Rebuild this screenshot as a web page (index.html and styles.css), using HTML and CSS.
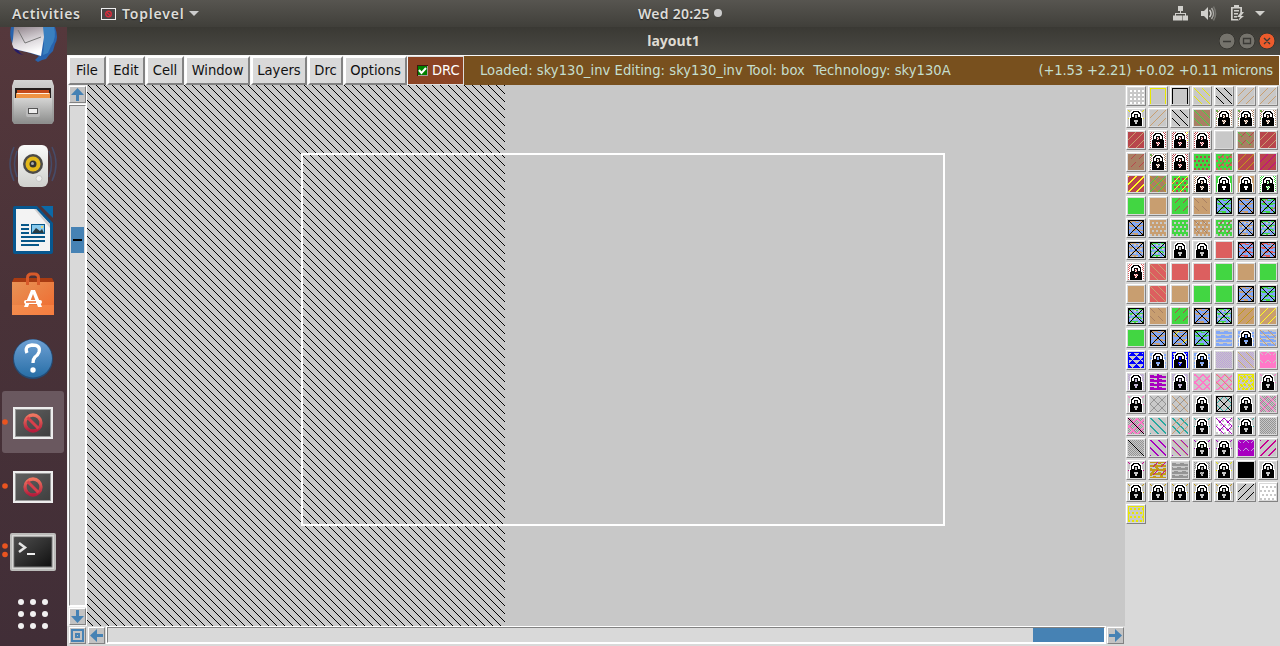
FILE: index.html
```html
<!DOCTYPE html>
<html lang="en">
<head>
<meta charset="utf-8">
<title>layout1</title>
<link rel="stylesheet" href="styles.css">
</head>
<body>
<header class="topbar">
  <span class="activities">Activities</span>
  <svg class="appicon" width="15" height="12"><rect width="15" height="12" fill="#eee"/><rect x="1" y="1" width="13" height="10" fill="#484546"/><circle cx="7.500" cy="6" r="2.800" fill="none" stroke="#d92c3c" stroke-width="1.400"/><path d="M5.500 4l4 4" stroke="#d92c3c" stroke-width="1.200"/></svg>
  <span class="appname">Toplevel</span>
  <svg class="caret" width="10" height="5"><path d="M0 0h10l-5 5z" fill="#ccc"/></svg>
  <span class="clock">Wed 20:25</span><i class="clockdot"></i>
  <svg class="tray" width="100" height="27" fill="#d0cfcb">
    <path d="M8 6h5v5h-2v2h5v2.500h2v5h-5v-5h2V14h-9v1.500h2v5H3v-5h2V13h5v-2H8z M9.500 15.500h2v0h1v5h-5v-5h2V14h0z"/>
    <path d="M31 11h3l4-4v13l-4-4h-3z"/><path d="M39.500 10q3 3.500 0 7" fill="none" stroke="#d0cfcb" stroke-width="1.500"/><path d="M41.500 8q4 5.500 0 11" fill="none" stroke="#aaa9a5" stroke-width="1.500"/><path d="M43.500 6.500q4 7 0 14" fill="none" stroke="#777671" stroke-width="1.500"/>
    <g transform="translate(1)"><path d="M63 5h5v2h3v6h-1.700V8.600h-7.600v10.300H67v1.600h-7V7h3z"/><path d="M63 10h5v1.400h-5zM63 13h4v1.400h-4zM63 16h3v1.400h-3zM70 12l-4 5h3l-2 4 6-5h-3l3-4z"/>
    <path d="M84 11h10l-5 5z"/></g>
  </svg>
</header>
<div class="desktop">
  <nav class="dock">
    <svg width="67" height="619" viewBox="0 27 67 619">
      <defs>
        <linearGradient id="blue" x2="0" y2="1"><stop stop-color="#6ea0d4"/><stop offset="1" stop-color="#276ea6"/></linearGradient>
        <linearGradient id="paper" x2=".3" y2="1"><stop stop-color="#8d8088"/><stop offset=".6" stop-color="#dcd8dc"/><stop offset="1" stop-color="#fff"/></linearGradient>
        <linearGradient id="bag" x2="1" y2="1"><stop stop-color="#e79356"/><stop offset="1" stop-color="#f0692e"/></linearGradient>
        <linearGradient id="metal" x2="0" y2="1"><stop stop-color="#d5d5d4"/><stop offset="1" stop-color="#8d8e8d"/></linearGradient>
        <linearGradient id="red" x2="0" y2="1"><stop stop-color="#ef7660"/><stop offset="1" stop-color="#b61d3c"/></linearGradient>
        <linearGradient id="term" x2="1" y2="1"><stop stop-color="#4b4b4b"/><stop offset=".5" stop-color="#303030"/><stop offset="1" stop-color="#111"/></linearGradient>
        <linearGradient id="speaker" x2="0" y2="1"><stop stop-color="#fafafa"/><stop offset="1" stop-color="#cfd0cd"/></linearGradient>
        <g id="window"><rect x="13" y="-16" width="40" height="32" fill="#ededed"/><rect x="15" y="-14" width="36" height="28" fill="#999"/><rect x="16" y="-13" width="34" height="26" fill="url(#term)"/><rect x="16" y="-13" width="34" height="26" fill="#777" opacity=".45"/><circle cx="33" cy="0" r="8" fill="none" stroke="url(#red)" stroke-width="3.300"/><path d="M27.500-5.500l11 11" stroke="#d83f4b" stroke-width="3"/></g>
      </defs>
      <path d="M11 27h44q4 11 0 17l-2 7-4 4-3 4-4 1-4 2-3-2 4-4-12-4-10-2-5-7q-3-8-1-16z" fill="#2863ad"/>
      <path d="M42 27h12q3 11-3 19l-3 7-5 2 1-10z" fill="#3a80c0"/><path d="M14 27h29l1 10-3 19-10-3-17-4-2-5 1-5z" fill="url(#paper)"/><path d="M13 48l5 2q2 4 6 5-8-1-11-7z" fill="#251b68"/><path d="M18 30l7 13 16-6" fill="none" stroke="#777" stroke-width="1"/>
      <rect x="2" y="391" width="62" height="62" rx="3" fill="#6a585f"/>
      <path d="M14 80h38l2 6v35l-2 3H14l-2-3V86z" fill="url(#metal)"/><rect x="15" y="88" width="36" height="11" fill="#241e1d"/><path d="M17 90h32v8H17z" fill="#c44a1a"/><path d="M16 93h34v5H16z" fill="#ef9342"/><path d="M17 93.500h32" stroke="#fff1df"/><rect x="14" y="98" width="38" height="25" fill="url(#metal)"/><rect x="26" y="106" width="14" height="11" rx="2" fill="#bbb"/><rect x="28.500" y="108.500" width="9" height="5" fill="#eee" stroke="#555"/>
      <g fill="none" stroke="#464c69" stroke-width="1.500"><path d="M14 147q-8 17 0 34M52 147q8 17 0 34M17 151q-5 13 0 26M49 151q5 13 0 26"/></g>
      <rect x="18" y="145" width="30" height="42" rx="6" fill="url(#speaker)"/><circle cx="33" cy="164" r="10" fill="#4d4b48"/><circle cx="33" cy="164" r="7.500" fill="#e3b81a"/><circle cx="33" cy="164" r="3.500" fill="#333"/><circle cx="32.500" cy="163.500" r="1.500" fill="#aaa"/><circle cx="39" cy="178.500" r="3" fill="#eee" stroke="#c7c7c5"/>
      <path d="M15 206h22l16 17v29q0 2-2 2H15q-2 0-2-2v-44q0-2 2-2z" fill="#07578f"/><path d="M41 206h12v12z" fill="#0b69a7"/><path d="M16 209h20l14 15v27H16z" fill="#f3f3f3"/><path d="M36 209l14 15v4L34 209z" fill="#cfcfcf"/><path d="M21 225h8M21 229h8M21 233h8M21 237h24M21 241h24M21 245h18" stroke="#075788" stroke-width="2"/><rect x="31" y="224" width="14" height="10" fill="#075788"/><rect x="32" y="225" width="12" height="8" fill="#86c9ed"/><path d="M32 233l4-5 4 3 2-2 2 4z" fill="#293b42"/><circle cx="42" cy="227" r="1" fill="#ffd94c"/>
      <path d="M14 278h38l2 4v33H12v-33z" fill="#a83b12"/><path d="M12 282h42v33H12z" fill="url(#bag)"/><path d="M12 305h42v10H12z" fill="#ff9a5a" opacity=".4"/><path d="M27.500 285v-7q0-4 4-4h3q4 0 4 4v7" fill="none" stroke="#d85a2a" stroke-width="3"/><path d="M31 290h4l7 17h-4l-5-13-5 13h-4z" fill="#fff"/><rect x="24" y="300" width="18" height="4" rx="2" fill="#fff"/><path d="M26 302h10" stroke="#e8692d" stroke-width="1.500"/>
      <circle cx="33" cy="359" r="20" fill="#244b75"/><circle cx="33" cy="358.500" r="19" fill="url(#blue)"/><path d="M27 353q-3-7 5-8 9 0 7 7-1 3-4 5-2 2-2 6" fill="none" stroke="#fff" stroke-width="3.300"/><circle cx="33" cy="370" r="2.700" fill="#fff"/>
      <use href="#window" y="423"/><use href="#window" y="487"/>
      <rect x="10" y="533" width="46" height="38" rx="2" fill="#bcbcba"/><rect x="12" y="535" width="42" height="34" fill="#d8d8d6"/><rect x="14" y="537" width="38" height="30" fill="#222" stroke="#777"/><rect x="15" y="538" width="36" height="28" fill="url(#term)"/><path d="M19 543l6 4.500-6 4.500" fill="none" stroke="#e6e6e6" stroke-width="2.500"/><path d="M27 554h8" stroke="#eee" stroke-width="2"/>
      <g fill="#e95420"><circle cx="5" cy="422" r="2.800"/><circle cx="5" cy="486" r="2.800"/><circle cx="5" cy="546" r="2.800"/><circle cx="5" cy="554.500" r="2.800"/></g>
      <g fill="#f2f1f1"><circle cx="21" cy="602" r="3"/><circle cx="33" cy="602" r="3"/><circle cx="45" cy="602" r="3"/><circle cx="21" cy="614" r="3"/><circle cx="33" cy="614" r="3"/><circle cx="45" cy="614" r="3"/><circle cx="21" cy="626" r="3"/><circle cx="33" cy="626" r="3"/><circle cx="45" cy="626" r="3"/></g>
    </svg>
  </nav>
  <main class="window">
    <div class="titlebar"><span>layout1</span>
      <svg class="controls" width="60" height="28"><g stroke="#363530"><circle cx="8" cy="14" r="8" fill="#75736c"/><circle cx="28" cy="14" r="8" fill="#75736c"/><circle cx="48" cy="14" r="8" fill="#ed5b2c"/></g><path d="M4 14.500h8M24.500 11.500h7v5h-7zM45 11l6 6M51 11l-6 6" fill="none" stroke="#3a3935" stroke-width="1.300"/></svg>
    </div>
    <div class="menubar">
      <button class="menu file">File</button><button class="menu edit">Edit</button><button class="menu cell">Cell</button><button class="menu win">Window</button><button class="menu layers">Layers</button><button class="menu drc">Drc</button><button class="menu options">Options</button>
      <label class="check"><svg width="11" height="11"><rect width="11" height="11" fill="#a99"/><path d="M0 0h11v1H1v10H0z" fill="#3f180d"/><rect x="1" y="1" width="9" height="9" fill="#008000"/><path d="M2 5l2.500 3L9 3" fill="none" stroke="#fff" stroke-width="2"/></svg><span>DRC</span></label>
      <div class="status"><span class="message">Loaded: sky130_inv Editing: sky130_inv Tool: box&nbsp; Technology: sky130A</span><span class="coords">(+1.53 +2.21) +0.02 +0.11 microns</span></div>
    </div>
    <div class="workspace">
      <section class="editor">
        <div class="vbar">
          <div class="key"><svg width="13" height="13"><path d="M6.500 0L13 7H8v6H5V7H0z"/></svg></div>
          <div class="vtrack"><div class="vthumb"></div></div>
          <div class="key"><svg width="13" height="13"><path d="M6.500 13L13 6H8V0H5v6H0z"/></svg></div>
        </div>
        <svg class="canvas" width="1038" height="541" shape-rendering="crispEdges">
          <defs><pattern id="hatch" x="1" width="8" height="8" patternUnits="userSpaceOnUse"><path d="M0 0h1v1h-1zM1 1h1v1h-1zM2 2h1v1h-1zM3 3h1v1h-1zM4 4h1v1h-1zM5 5h1v1h-1zM6 6h1v1h-1zM7 7h1v1h-1z"/></pattern></defs>
          <rect width="1038" height="541" fill="#c8c8c8"/><rect width="418" height="541" fill="url(#hatch)"/>
          <rect x="215" y="69" width="642" height="371" fill="none" stroke="#fff" stroke-width="2"/>
        </svg>
        <div class="key corner"><svg width="13" height="13"><path fill-rule="evenodd" d="M0 0h13v13H0zM2 2v9h9V2zM4 4h5v5H4zM6 6v1h1V6z"/></svg></div>
        <div class="hbar">
          <div class="key"><svg width="13" height="13"><path d="M0 6.500L7 0v5h6v3H7v5z"/></svg></div>
          <div class="htrack"><div class="hthumb"></div></div>
          <div class="key"><svg width="13" height="13"><path d="M13 6.500L6 0v5H0v3h6v5z"/></svg></div>
        </div>
      </section>
      <aside class="palette" id="palette"></aside>
    </div>
  </main>
</div>
<script src="palette.js"></script>
</body>
</html>
```
FILE: styles.css
```css
* { box-sizing: border-box; }
body { margin: 0; width: 1280px; height: 646px; overflow: hidden; background: #d9d9d9; font-family: "DejaVu Sans Condensed", "DejaVu Sans", sans-serif; font-stretch: condensed; }
svg { display: block; flex: none; }
.topbar { position: relative; display: flex; align-items: center; height: 27px; padding-left: 12px; background: linear-gradient(#575550, #403f3a); color: #dddcd8; font: 600 14px/27px "Noto Sans", sans-serif; text-shadow: 0 1px 1px #222; white-space: nowrap; }
.activities { width: 89px; letter-spacing: .6px; }
.appname { margin-left: 6px; width: 67px; letter-spacing: .8px; }
.clock { position: absolute; left: 638px; letter-spacing: .25px; }
.clockdot { position: absolute; left: 714px; top: 9px; width: 8px; height: 8px; border-radius: 50%; background: #ccc; }
.tray { position: absolute; left: 1170px; top: 0; }
.desktop { display: flex; height: 619px; }
.dock { width: 67px; flex: none; background: linear-gradient(#55383c, #493238 45%, #412e37); }
.window { width: 1213px; }
.titlebar { height: 28px; position: relative; display: flex; justify-content: center; background: linear-gradient(#3a3934, #4a4943); color: #dfdbd2; font: 700 14px/28px "Noto Sans", sans-serif; }
.controls { position: absolute; right: 1px; top: 0; }
.menubar { display: flex; height: 30px; background: #f8f8f8; padding: 1px 1px 0; gap: 1px; font-size: 14.6px; }
.menu { height: 29px; margin: 0; padding: 0 0 3px; font: inherit; color: #111; background: #d9d9d9; border: 2px solid; border-color: #fff #828282 #828282 #fff; white-space: nowrap; }
.file, .edit, .cell { width: 38px; }
.win { width: 65px; }
.layers { width: 56px; }
.drc { width: 35px; }
.options { width: 63px; }
.check { display: flex; align-items: center; gap: 4px; width: 56px; padding-left: 9px; background: #8c4424; color: #fff; border: solid #ddd; border-width: 1px 1px 1px 0; }
.check span { padding-bottom: 2px; }
.status { flex: 1; display: flex; justify-content: space-between; align-items: center; margin-left: -1px; padding: 0 6px 2px 16px; background: #78501e; color: #c5dfcf; white-space: pre; }
.message { letter-spacing: .045px; }
.coords { letter-spacing: -.16px; }
.workspace { display: flex; height: 561px; }
.editor { display: grid; grid-template: 541px 20px / 20px 1038px; background: #d9d9d9; }
.vbar { display: flex; flex-direction: column; align-items: center; padding: 1px 0 1px 1px; gap: 2px; height: 541px; background: #eee; border-right: 1px solid #fff; }
.key { width: 17px; height: 17px; flex: none; padding: 1px; background: #c3c3c3; border: 1px solid; border-color: #fff #828282 #828282 #fff; }
.key svg { fill: #4682b4; }
.vtrack { width: 17px; flex: 1; padding: 121px 0 0 1px; border: 1px solid; border-color: #828282 #fff #fff #828282; outline: 1px solid #fff; background: #d9d9d9; }
.vthumb { width: 13px; height: 26px; background: #4682b4; padding: 12px 2px; }
.vthumb::before { content: ""; display: block; height: 2px; background: #000; }
.corner { margin: 1px 0 0 2px; }
.hbar { display: flex; align-items: flex-start; gap: 2px; padding: 1px 1px 0; }
.htrack { flex: 1; height: 16px; display: flex; justify-content: flex-end; border: 1px solid; border-color: #828282 #fff #fff #828282; outline: 1px solid #fff; background: #d9d9d9; }
.hthumb { width: 71px; height: 14px; background: #4682b4; }
.palette { flex: 1; display: grid; grid-template-columns: repeat(7, 20px); grid-auto-rows: 20px; align-content: start; gap: 2px; padding: 1px 0 0 1px; background: #d9d9d9; }
.swatch { width: 20px; height: 20px; padding: 1px; border: 1px solid; border-color: #fff #828282 #828282 #fff; background: #d9d9d9; }
```
FILE: palette.js
```js
// Colour keys used by the layer table.
const colors = {
  _: "#c8c8c8", w: "#ffffff", y: "#e8e800", k: "#000000", t: "#c89e70", b: "#a88064",
  g: "#42d642", r: "#dc5f5f", d: "#b8464c", u: "#82a8f8", B: "#0000ff", v: "#bda0dc",
  p: "#ff78c8", P: "#a800c0", c: "#28a8a0", e: "#949494", o: "#c39a18", m: "#c80090", Y: "#ffff20"
};

// Each test tells whether the pixel at (x, y) of the 16 by 16 swatch is painted.
const tests = {
  dots: (x, y) => x % 4 > 1 && y % 4 > 1,
  stag: (x, y) => (x + (y >> 2) * 2) % 4 > 1 && y % 4 > 1,
  grid: (x, y) => !((x + (y >> 2) * 2) % 4 > 1 && y % 4 > 1),
  edge: (x, y) => y < 1 || x < 1 || x > 14,
  fall: (x, y) => (x - y + 16) % 8 === 0,
  Fall: (x, y) => (x - y + 16) % 8 < 2,
  rise: (x, y) => (x + y + 1) % 8 === 0,
  Rise: (x, y) => (x + y + 1) % 8 < 2,
  dash: (x, y) => (x + y) % 8 === 7 && y % 8 < 5,
  fdash: (x, y) => (x - y + 16) % 8 === 0 && y % 8 < 5,
  corners: (x, y) => ((x + y) % 8 === 7 || (x - y + 16) % 8 === 0) && y % 8 < 3,
  check: (x, y) => (x + y) % 2 === 0,
  mesh: (x, y) => (x + y) % 8 === 7 || (x - y + 16) % 8 === 0,
  Mesh: (x, y) => (x + y) % 8 < 2 || (x - y + 16) % 8 < 2,
  waves: (x, y) => y % 4 > 1 || (y % 4 === 1 && (x + (y >> 2) * 3) % 8 < 4),
  wisps: (x, y) => (y % 4 === 1 && (x + (y >> 2) * 3) % 11 < 8) || (y % 4 === 2 && (x + (y >> 2) * 5) % 7 < 4),
  blocks: (x, y) => y % 4 > 1 || (y % 4 === 1 && x % 8 < 4) || (x > 6 && x < 9),
  tri: (x, y) => Math.abs((x + (y >> 2) * 4) % 8 - 4) <= y % 4,
  one: (x, y) => x === y,
  box: (x, y) => y < 1 || x < 1 || x > 14 || y > 14 || x === y || x + y === 15,
  halo: (x, y) => y < 3 || x < 2 || x > 13
};

const lock = [
  "....WWWWWWWW....", "...WWKKKKKKWW...", "..WWKKWWWWKKWW..", "..WKKWWWWWWKKW..",
  "..WKWWKKKKWWKW..", "..WKWWK..KWWKW..", "..WKWWK..KWWKW..", ".WWKKKK..KKKKWW.",
  ".WKKKKKKKKKKKKW.", ".WKKKKKKKKKKKKW.", ".WKKKK....KKKKW.", ".WKKKK....KKKKW.",
  ".WKKKKK..KKKKKW.", ".WKKKKK..KKKKKW.", ".WKKKKKKKKKKKKW.", ".WKKKKKKKKKKKKW."
];

// Background, then pattern:colour pairs; L draws the padlock.
const rows = [
  "_ dots:w|_ edge:y|_ edge:k|_ fall:y|_ fall:k|_ rise:t|_ rise:t",
  "_ corners:y L|_ rise:t|_ fall:k|b fall:g|b check:w fdash:g L|b check:w fdash:g L|b check:w fdash:g L",
  "d rise:t|d check:w L|d check:w dash:Y L|d check:w L|_|b dash:d fdash:g|d rise:t",
  "b dash:d|b check:w fdash:g L|d check:w L|g stag:d|g stag:r dash:d|d rise:o|d rise:m",
  "d Rise:Y|b rise:g fall:o|g stag:d rise:Y|b check:w dash:m L|w halo:g L|w halo:t L|g check:w L",
  "g|t|g dash:d|t fdash:b|u wisps:g box:k|u wisps:t box:k|u wisps:g dash:r box:k",
  "u wisps:t box:k|t stag:_|g stag:_|t stag:_ fdash:b|g stag:_ dash:d|u wisps:t stag:_ box:k|u wisps:g stag:_ box:k",
  "u wisps:t stag:_ box:k|u wisps:g stag:_ box:k|_ L|_ L|r|u wisps:r box:k|u wisps:r fdash:t box:k",
  "r check:w L|r fall:t|r|r|g|t|g",
  "t|r fall:t|t|g|g|u wisps:t box:k|u wisps:g box:k",
  "u wisps:g stag:_ box:k|t fdash:b|g dash:d|u wisps:t box:k|u wisps:g stag:_ box:k|t rise:o|t rise:Y",
  "g|u wisps:t box:k|u wisps:t dash:Y box:k|u wisps:g box:k|_ waves:u|_ waves:u L|_ waves:u fall:t",
  "_ tri:B edge:B|_ waves:u L|_ tri:B edge:B L|_ waves:u L|_ check:v|_ check:v fall:t|p corners:_",
  "_ check:v L|_ blocks:P|_ check:v L|_ Mesh:p|_ Mesh:p fall:t|_ edge:y stag:y mesh:y|_ corners:p L",
  "_ corners:p L|_ mesh:e|_ mesh:e fall:t|_ L|_ rise:c fall:c box:k|_ L|_ check:e fall:p rise:p",
  "_ check:e Mesh:p one:k|_ Fall:c|_ Fall:c rise:t|_ corners:c L|w stag:_ fall:P dash:P|_ corners:c L|_ check:e",
  "_ check:e one:k|_ Fall:P|_ Fall:P fall:t|_ corners:P L|_ corners:P L|P corners:v|_ Rise:m",
  "_ corners:m L|o wisps:_ dash:m|_ waves:e|_ check:e L|_ corners:y L|k|_ L",
  "_ corners:o L|_ corners:o L|_ corners:o L|_ corners:o L|_ corners:o L|_ rise:k|_ grid:w",
  "_ edge:y stag:y"
];

function paint(test, fill) {
  let d = "";
  for (let y = 0; y < 16; y++)
    for (let x = 0; x < 16; x++)
      if (test(x, y)) d += `M${x} ${y}h1v1h-1z`;
  return `<path fill="${fill}" d="${d}"/>`;
}

document.getElementById("palette").innerHTML = rows.flatMap(row => row.split("|")).map(spec => {
  const [bg, ...layers] = spec.split(" ");
  const art = layers.map(layer => {
    if (layer === "L")
      return paint((x, y) => lock[y][x] === "W", "#fff") + paint((x, y) => lock[y][x] === "K", "#000");
    const [name, color] = layer.split(":");
    return paint(tests[name], colors[color]);
  }).join("");
  return `<div class="swatch"><svg width="16" height="16" shape-rendering="crispEdges"><rect width="16" height="16" fill="${colors[bg]}"/>${art}</svg></div>`;
}).join("");
```
